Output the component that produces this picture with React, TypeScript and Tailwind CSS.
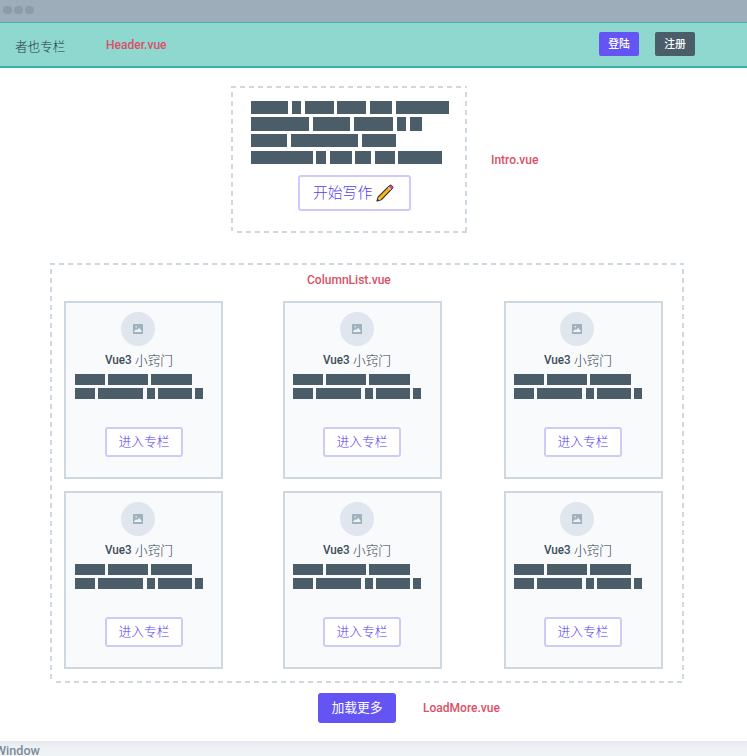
type Block = [gap: number, width: number];

const introRows: Block[][] = [
  [[0, 37], [4, 9], [4, 29], [3.6, 29.2], [3.6, 22], [3.6, 53]],
  [[0, 58.2], [3.8, 37.6], [3.4, 39.6], [3.6, 9.4], [3.4, 12]],
  [[0, 36.9], [3.7, 67.3], [3.6, 34]],
  [[0, 62], [3.7, 10], [3.7, 21.8], [3.2, 16.4], [3.5, 19.7], [3.7, 44.2]],
];

const cardRows: Block[][] = [
  [[0, 30.2], [3.2, 40.2], [3.2, 41.2]],
  [[0, 20.6], [3.2, 45.2], [3.2, 8], [3.2, 34.4], [3.2, 8]],
];

function Skeleton({ rows, size, gap }: { rows: Block[][]; size: string; gap: string }) {
  return (
    <div className={`flex flex-col ${gap}`}>
      {rows.map((row, i) => (
        <div key={i} className={`flex ${size}`}>
          {row.map(([before, width], j) => (
            <div key={j} className="h-full shrink-0 bg-[#4c5d6a]" style={{ marginLeft: before, width }} />
          ))}
        </div>
      ))}
    </div>
  );
}

const dashH = "h-[2px] shrink-0 bg-[repeating-linear-gradient(90deg,#cdd8e1_0_5px,transparent_5px_9px)]";
const dashV = "w-[2px] shrink-0 bg-[repeating-linear-gradient(180deg,transparent_0_4px,#cdd8e1_4px_9px)]";

function Dashed({ className, children }: { className: string; children: React.ReactNode }) {
  return (
    <section className={`flex flex-col ${className}`}>
      <div className={dashH} />
      <div className="flex min-h-0 flex-1">
        <div className={dashV} />
        <div className="min-w-0 flex-1">{children}</div>
        <div className={dashV} />
      </div>
      <div className={`${dashH} ml-[6px]`} />
    </section>
  );
}

function Label({ children, className }: { children: string; className: string }) {
  return (
    <span className={`block whitespace-nowrap font-['Roboto'] text-[13px] font-medium leading-[16px] text-[#da5067] ${className}`}>
      <span className="inline-block origin-left scale-x-[0.925]">{children}</span>
    </span>
  );
}

function Pencil() {
  return (
    <svg viewBox="0 0 18 18" className="size-[18px]">
      <path d="M1 17 2.2 12.8 12.8 2.4 15.6 5.2 5.2 15.8Z" fill="#fdb415" stroke="#292929" strokeWidth="1.1" strokeLinejoin="round" />
      <path d="m12.2 3 1.3-1.5q1.2-1 2.4.1l.5.5q1.1 1.2.1 2.4L15 5.8Z" fill="#e64863" stroke="#292929" strokeWidth=".8" />
      <path d="m11.8 3.6 1-.9 2.5 2.5-1 1Z" fill="#c7d0d8" />
      <path d="M1.7 16.3 2.6 13.4l2 2.1Z" fill="#f2cfa5" />
      <path d="M1 17 1.7 14.8 3.2 16.3Z" fill="#292929" />
    </svg>
  );
}

function Card({ column }: { column: number }) {
  const first = column === 0;
  return (
    <article className={`h-[178px] w-[159px] border-2 border-[#cdd8e1] bg-[#f8fafc] pt-[9px] ${first ? "pl-[8.5px]" : "pl-[7.5px]"}`}>
      <div className={`flex size-[34px] items-center justify-center rounded-full bg-[#dfe6ed] ${column === 1 ? "ml-[47.5px]" : "ml-[46.5px]"}`}>
        <svg viewBox="0 0 10 10" className="size-[10px]">
          <rect width="10" height="10" rx="0.6" fill="#9fb0be" />
          <path d="M1.2 7.9V7.2L3 5.2 4.2 6.1 6.2 3.7 7.2 5.6 7.9 5.5 8.8 7.9Z" fill="#edf2f6" />
          <circle cx="3.2" cy="2.8" r=".8" fill="#edf2f6" />
        </svg>
      </div>
      <h3 className="mt-[4px] ml-[30.5px] flex h-[20px] items-center whitespace-nowrap text-[#2f3d48]">
        <span className="w-[30px] font-['Roboto'] text-[13.4px] font-medium leading-[20px] text-[#3d4c58]">
          <span className="inline-block origin-left scale-x-[0.87]">Vue3</span>
        </span>
        <span className="-mt-px font-['Noto_Sans_CJK_SC',sans-serif] text-[12.7px] leading-[20px] font-light">小窍门</span>
      </h3>
      <div className="mt-[4px]">
        <Skeleton rows={cardRows} size="h-[11px]" gap="gap-[3px]" />
      </div>
      <button className="mt-[28px] ml-[30.5px] flex h-[30px] w-[78px] items-center justify-center rounded-[3px] border-2 border-[#d0cafa] bg-white pb-[2px] font-['Noto_Sans_CJK_SC',sans-serif] text-[12.8px] font-light text-[#5240f0]">
        进入专栏
      </button>
    </article>
  );
}

export default function App() {
  return (
    <div className="flex h-[756px] w-[747px] flex-col overflow-hidden bg-white font-['Noto_Sans_CJK_SC',sans-serif]">
      <div className="flex h-[22px] shrink-0 gap-[2.5px] bg-[#9eadba] pt-[5.5px] pl-[3px]">
        <i className="size-[8.7px] rounded-full bg-[#8b9baa]" />
        <i className="size-[8.7px] rounded-full bg-[#8b9baa]" />
        <i className="size-[8.7px] rounded-full bg-[#8b9baa]" />
      </div>
      <header className="flex h-[46px] shrink-0 border-t border-b-2 border-t-[#40b5a8] border-b-[#38b2a6] bg-[#8fd8cf]">
        <span className="mt-[13px] ml-[15px] w-[91px] text-[12.6px] leading-[20px] font-light text-[#263a44]">者也专栏</span>
        <Label className="mt-[14px] w-[493px]">Header.vue</Label>
        <button className="mt-[9px] flex h-[24px] w-[40px] items-center justify-center rounded-[2px] bg-[#6554f4] pb-[2px] text-[10.8px] font-medium text-white">登陆</button>
        <button className="mt-[9px] ml-[16px] flex h-[24px] w-[40px] items-center justify-center rounded-[2px] bg-[#4c5d6a] pb-[2px] text-[10.8px] font-medium text-white">注册</button>
      </header>
      <main className="flex h-[673px] shrink-0 flex-col">
        <div className="mt-[18px] ml-[231px] flex">
          <Dashed className="h-[147px] w-[236px]">
            <div className="pt-[12.8px] pl-[17.6px]">
              <Skeleton rows={introRows} size="h-[13.3px]" gap="gap-[3.4px]" />
              <button className="mt-[10.6px] ml-[47.4px] flex h-[36px] w-[113px] items-center gap-[4px] rounded-[3px] border-2 border-[#d0cafa] bg-white pl-[13px] text-[14.8px] font-light whitespace-nowrap text-[#5240f0]">
                <span className="-mt-[2px]">开始写作</span>
                <Pencil />
              </button>
            </div>
          </Dashed>
          <Label className="mt-[66px] ml-[24px]">Intro.vue</Label>
        </div>
        <Dashed className="mt-[30px] ml-[50px] h-[420px] w-[634px]">
          <Label className="mt-[7px] ml-[255px]">ColumnList.vue</Label>
          <div className="mt-[13px] ml-[12px] grid grid-cols-[219px_221px_159px] gap-y-[12px]">
            {[0, 1, 2, 3, 4, 5].map((i) => (
              <Card key={i} column={i % 3} />
            ))}
          </div>
        </Dashed>
        <div className="mt-[10px] ml-[318px] flex">
          <button className="flex h-[30px] w-[78px] items-center justify-center rounded-[3px] bg-[#6554f4] pb-[2px] text-[12.8px] text-white">加载更多</button>
          <Label className="mt-[7px] ml-[27px]">LoadMore.vue</Label>
        </div>
      </main>
      <footer className="flex-1 bg-linear-to-b from-[#e5e9ed] to-[#eff3f6] to-40%">
        <span className="-ml-[5px] block pt-[2px] font-['Roboto'] text-[12.6px] leading-[16px] font-medium text-[#7c8b99]">Window</span>
      </footer>
    </div>
  );
}
